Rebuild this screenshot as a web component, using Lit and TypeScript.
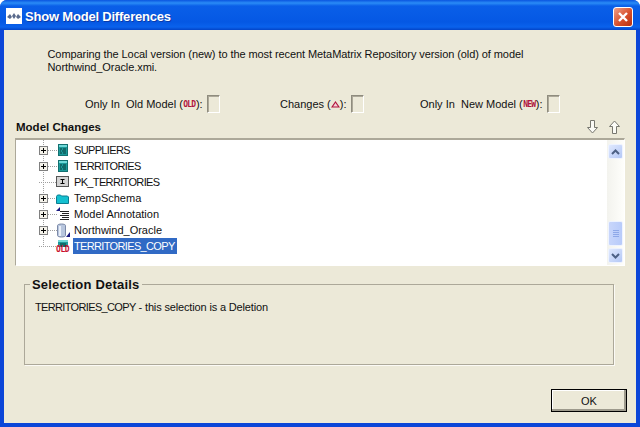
import { LitElement, html, css, svg } from "lit";
import { customElement } from "lit/decorators.js";

const tableIcon = svg`<svg width="15" height="16" viewBox="0 0 15 16"><rect x="1" y="2" width="10" height="12" fill="#1c9a9a"/><rect x="1" y="2" width="10" height="3" fill="#6fd8d8"/><path d="M3 7h2M6 7h3M3 9h1M5 9h4M3 11h2M6 11h3" stroke="#063a3a"/><rect x="1.500" y="2.500" width="9" height="11" fill="none" stroke="#137070"/></svg>`;
const keyIcon = svg`<svg width="15" height="16" viewBox="0 0 15 16"><rect x="-0.500" y="2.500" width="12" height="10" fill="#d4d4d4" stroke="#555"/><path d="M3.500 5.500h4M3.500 9.500h4M5.500 5.500v4" stroke="#000" fill="none"/></svg>`;
const folderIcon = svg`<svg width="15" height="16" viewBox="0 0 15 16"><path d="M-0.500 13.500V6.500l1-1.500h3l1 1h6l1 1v6.500z" fill="#14c0d0" stroke="#0a7d90"/></svg>`;
const noteIcon = svg`<svg width="15" height="16" viewBox="0 0 15 16"><path d="M-1 5l4-4v4z" fill="#1a1a80"/><path d="M3 5.500h9M5 7.500h7M3 9.500h9M5 11.500h7M3 13.500h9" stroke="#222"/></svg>`;
const dbIcon = svg`<svg width="15" height="16" viewBox="0 0 15 16"><path d="M0.500 3.500C0.500 1.500 8.500 1.500 8.500 3.500V13.500c0 2-8 2-8 0z" fill="#b8c6de" stroke="#7c8aa8"/><path d="M3 4v10" stroke="#e8eef8" stroke-width="2"/><path d="M9 15l4-5v5z" fill="#1a1a80"/></svg>`;
const oldIcon = html`<span class="oldbadge"><svg width="15" height="16" viewBox="0 0 15 16"><rect x="1" y="2" width="10" height="7" fill="#1c9a9a"/><rect x="1" y="2" width="10" height="2" fill="#6fd8d8"/><path d="M3 6h6M3 8h6" stroke="#063a3a"/></svg><b>OLD</b></span>`;

const rows = [
  { name: "SUPPLIERS", icon: tableIcon, plus: true, caps: true },
  { name: "TERRITORIES", icon: tableIcon, plus: true, caps: true },
  { name: "PK_TERRITORIES", icon: keyIcon, plus: false, caps: true },
  { name: "TempSchema", icon: folderIcon, plus: true, caps: false },
  { name: "Model Annotation", icon: noteIcon, plus: true, caps: false },
  { name: "Northwind_Oracle", icon: dbIcon, plus: true, caps: false },
];

@customElement("app-root")
export class AppRoot extends LitElement {
  static styles = css`
    :host {
      display: block;
      width: 640px;
      height: 427px;
      font-family: "Liberation Sans", Arial, sans-serif;
      font-size: 11px;
      color: #111;
      overflow: hidden;
    }
    .win {
      height: 427px;
      box-sizing: border-box;
      display: flex;
      flex-direction: column;
      background: #0b46d8;
      border-radius: 7px 7px 0 0;
    }
    .title {
      height: 30px;
      flex: none;
      box-sizing: border-box;
      display: flex;
      align-items: center;
      padding: 2px 7px 0 6px;
      background: linear-gradient(#0a55e0 0, #2a8cf6 3px, #0a5fe8 6px, #0558e4 22px, #0a62ec 27px, #0344c8 30px);
      border-radius: 7px 7px 0 0;
      color: #fff;
      font-weight: bold;
      font-size: 13px;
      letter-spacing: -0.2px;
    }
    .appicon {
      width: 16px;
      height: 16px;
      background: #fff;
      margin-right: 3px;
      display: block;
    }
    .title span {
      flex: 1;
      text-shadow: 1px 1px 0 #0a3aa8;
    }
    .close {
      width: 20px;
      height: 20px;
      margin-top: 2px;
      box-sizing: border-box;
      border: 1px solid #fff;
      border-radius: 3px;
      background: linear-gradient(135deg, #f0a088, #d8502c 55%, #b83010);
      display: block;
    }
    .client {
      flex: 1;
      margin: 0 4px 4px 4px;
      background: #ece9d8;
      display: flex;
      flex-direction: column;
      min-height: 0;
    }
    .desc {
      margin: 0;
      padding: 18px 0 0 43.5px;
      line-height: 13px;
      height: 38px;
      width: 500px;
      letter-spacing: -0.08px;
    }
    .legend {
      display: flex;
      height: 18px;
      margin-top: 9px;
      align-items: center;
      padding-left: 81px;
    }
    .legend .item {
      display: flex;
      align-items: center;
      white-space: pre;
    }
    .item.a { width: 195px; }
    .item.b { width: 140px; }
    .cb {
      display: block;
      box-sizing: border-box;
      width: 13px;
      height: 18px;
      margin-left: 4px;
      border: 1px solid;
      border-color: #8f8c7e #fff #fff #8f8c7e;
      box-shadow: inset 1px 1px 0 #aca899;
    }
    .tag {
      color: #b0143c;
      font-family: "DejaVu Sans Mono", monospace;
      font-weight: bold;
      font-size: 8px;
      letter-spacing: -0.8px;
      margin: 0 0.5px;
    }
    .head {
      display: flex;
      align-items: center;
      height: 20px;
      margin: 4px 0 1px;
      padding: 0 16px 0 12px;
      font-weight: bold;
      font-size: 11.5px;
    }
    .head span { flex: 1; }
    .head svg { display: block; margin-left: 11px; }
    .tree {
      display: flex;
      height: 128px;
      margin: 0 11px;
      box-sizing: border-box;
      border-top: 2px solid #aca899;
      border-left: 1px solid #aca899;
      border-right: 1px solid #fff;
      border-bottom: 1px solid #fff;
      background: #fff;
    }
    .list {
      flex: 1;
      margin: 0;
      padding: 2px 0 0 0;
      list-style: none;
      position: relative;
    }
    .list li {
      height: 16px;
      display: flex;
      align-items: center;
      padding-left: 23px;
    }
    .twist {
      width: 9px;
      height: 9px;
      box-sizing: border-box;
      border: 1px solid #808080;
      background: #f4f2ea;
      position: relative;
      flex: none;
    }
    .twist::before {
      content: "";
      position: absolute;
      left: 1px;
      right: 1px;
      top: 3px;
      height: 1px;
      background: #000;
    }
    .twist::after {
      content: "";
      position: absolute;
      top: 1px;
      bottom: 1px;
      left: 3px;
      width: 1px;
      background: #000;
    }
    .dots {
      width: 9px;
      height: 1px;
      flex: none;
      background: repeating-linear-gradient(90deg, #a0a0a0 0 1px, transparent 1px 2px);
    }
    .nodots { width: 18px; }
    .ic {
      width: 15px;
      height: 16px;
      margin-right: 2px;
      flex: none;
    }
    .ic svg { display: block; overflow: visible; }
    .caps { letter-spacing: -0.65px; }
    .sel {
      background: #316ac5;
      color: #fff;
      padding: 0 2px 0 1px;
      line-height: 16px;
      margin-left: -1px;
    }
    .vline {
      position: absolute;
      left: 27px;
      top: 0;
      height: 106px;
      width: 1px;
      background: repeating-linear-gradient(#a0a0a0 0 1px, transparent 1px 2px);
    }
    .oldbadge { display: block; position: relative; height: 16px; }
    .oldbadge b {
      position: absolute;
      left: -1px;
      top: 8px;
      font: bold 8px "DejaVu Sans Mono", monospace;
      letter-spacing: -0.4px;
      color: #c8102e;
      line-height: 8px;
    }
    .scroll {
      width: 17px;
      flex: none;
      box-sizing: border-box;
      padding: 4px 1px 2px;
      background: linear-gradient(90deg, #f3f3ee, #fefefb);
      display: flex;
      flex-direction: column;
    }
    .sb {
      height: 15px;
      box-sizing: border-box;
      background: linear-gradient(135deg, #e0e9fe, #b4c8f6);
      border: 1px solid #eef3ff;
      border-radius: 2px;
      display: flex;
      align-items: center;
      justify-content: center;
      flex: none;
    }
    .gap { flex: 1; }
    .thumb {
      height: 25px;
      margin-bottom: 2px;
      box-sizing: border-box;
      background: linear-gradient(90deg, #c8d6fb, #b8cbfa);
      border: 1px solid #eef3ff;
      border-radius: 2px;
      display: flex;
      flex-direction: column;
      align-items: center;
      justify-content: center;
      gap: 1px;
    }
    .thumb i {
      display: block;
      width: 6px;
      height: 1px;
      background: #8ea8e8;
    }
    fieldset {
      margin: 11px 22px 0 20px;
      padding: 0;
      height: 88px;
      box-sizing: border-box;
      border: 1px solid #aca899;
      box-shadow: 1px 1px 0 #fbfaf5;
    }
    legend {
      font-weight: bold;
      font-size: 13px;
      letter-spacing: 0.2px;
      padding: 0 3px 0 2px;
      margin-left: 5px;
      line-height: 15px;
    }
    fieldset p {
      margin: 9px 0 0 0;
      padding-left: 10px;
      line-height: 13px;
      letter-spacing: -0.15px;
    }
    .foot {
      display: flex;
      justify-content: flex-end;
      padding: 24px 9px 0 0;
    }
    button {
      width: 76px;
      height: 23px;
      padding: 0;
      box-sizing: border-box;
      border: 1px solid #000;
      box-shadow: inset -2px -2px 0 #9d9a8c, inset 1px 1px 0 #fff;
      background: #ece9d8;
      font: 11px "Liberation Sans", Arial, sans-serif;
      color: #111;
    }
  `;

  render() {
    return html`
      <div class="win">
        <div class="title">
          <svg class="appicon" viewBox="0 0 16 16"><path d="M1 9l3-3 2 3-2 2zM6 8l2-3 2 3-2 3zM10 9l2-3 3 3-3 2z" fill="#5a6a8c"/></svg>
          <span>Show Model Differences</span>
          <svg class="close" viewBox="0 0 18 18"><path d="M5 5l8 8M13 5l-8 8" stroke="#fff" stroke-width="2.4"/></svg>
        </div>
        <div class="client">
          <p class="desc">Comparing the Local version (new) to the most recent MetaMatrix Repository version (old) of model<br />Northwind_Oracle.xmi.</p>
          <div class="legend">
            <div class="item a">Only In  Old Model (<span class="tag">OLD</span>):<span class="cb"></span></div>
            <div class="item b">Changes (<svg width="9" height="7" viewBox="0 0 9 7"><path d="M4.5 1L8 6H1z" fill="#f4d0d8" stroke="#b0143c" stroke-width="1.2"/></svg>):<span class="cb"></span></div>
            <div class="item">Only In  New Model (<span class="tag">NEW</span>):<span class="cb"></span></div>
          </div>
          <div class="head">
            <span>Model Changes</span>
            <svg width="11" height="14" viewBox="0 0 11 14"><path d="M3.500 0.500h4v7h3L5.500 13 0.500 7.500h3z" fill="#fbfbf6" stroke="#77776f"/></svg>
            <svg width="11" height="14" viewBox="0 0 11 14"><path d="M3.500 13.500h4v-7h3L5.500 1 0.500 6.500h3z" fill="#fbfbf6" stroke="#77776f"/></svg>
          </div>
          <div class="tree">
            <ul class="list">
              <div class="vline"></div>
              ${rows.map(
                (r) => html`<li>
                  ${r.plus
                    ? html`<span class="twist"></span><span class="dots"></span>`
                    : html`<span class="dots nodots"></span>`}
                  <span class="ic">${r.icon}</span><span class=${r.caps ? "caps" : ""}>${r.name}</span>
                </li>`,
              )}
              <li>
                <span class="dots nodots"></span>
                <span class="ic">${oldIcon}</span><span class="sel caps">TERRITORIES_COPY</span>
              </li>
            </ul>
            <div class="scroll">
              <div class="sb"><svg width="9" height="6" viewBox="0 0 9 6"><path d="M1 5l3.500-3.500L8 5" fill="none" stroke="#4d6185" stroke-width="2"/></svg></div>
              <div class="gap"></div>
              <div class="thumb"><i></i><i></i><i></i><i></i></div>
              <div class="sb"><svg width="9" height="6" viewBox="0 0 9 6"><path d="M1 1l3.500 3.500L8 1" fill="none" stroke="#4d6185" stroke-width="2"/></svg></div>
            </div>
          </div>
          <fieldset>
            <legend>Selection Details</legend>
            <p><span class="caps">TERRITORIES_COPY</span> - this selection is a Deletion</p>
          </fieldset>
          <div class="foot"><button>OK</button></div>
        </div>
      </div>
    `;
  }
}
